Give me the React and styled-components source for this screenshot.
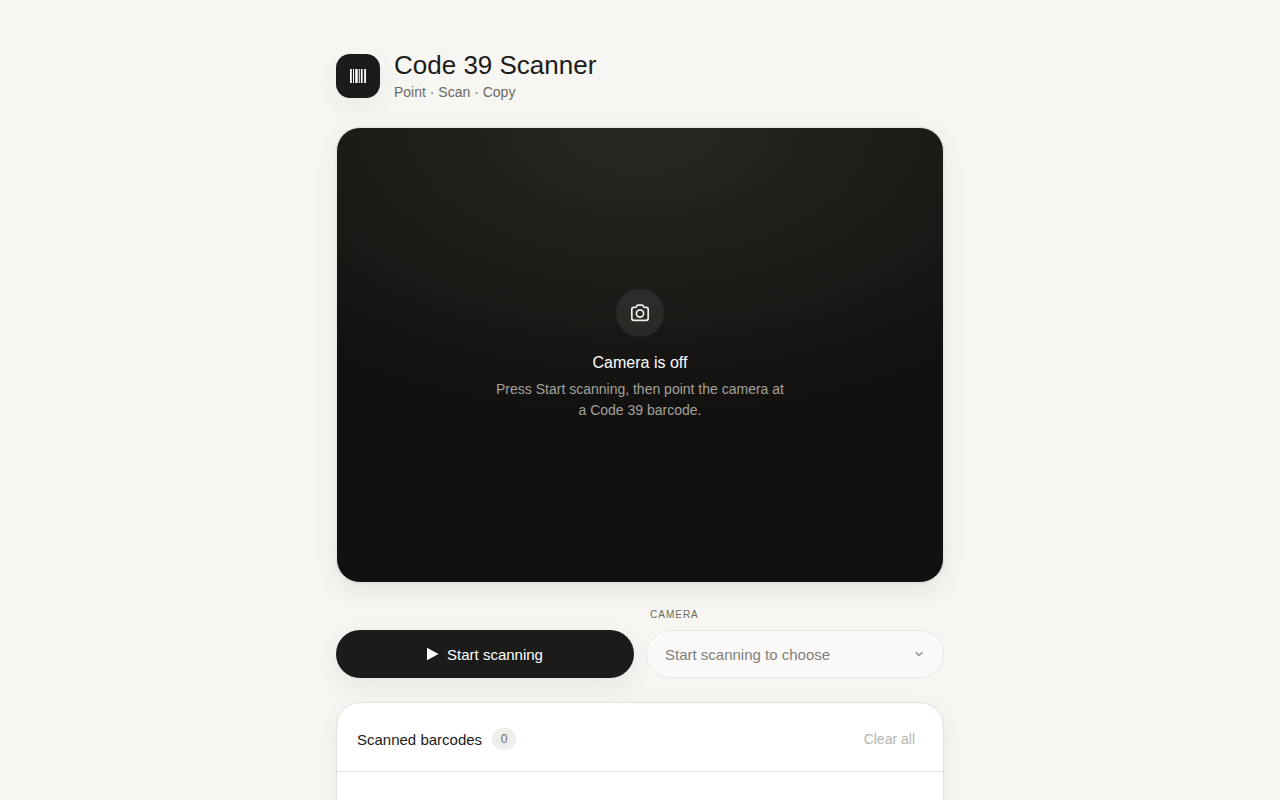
import React, { useState } from 'react';
import styled, { createGlobalStyle } from 'styled-components';

function App() {
  const [codes, setCodes] = useState([]);

  return (
    <>
      <GlobalStyle />
      <StPage>
        <StHeader>
          <StLogo>
            <svg width='16' height='14' viewBox='0 0 16 14' aria-hidden='true'>
              <path
                d='M0 0h1.800v14H0zM3 0h1v14H3zM5.200 0h2.500v14H5.200zM8.800 0h1v14h-1zM10.900 0h1.700v14h-1.700zM14.200 0H16v14h-1.800z'
                fill='#fff'
              />
            </svg>
          </StLogo>
          <div>
            <StTitle>Code 39 Scanner</StTitle>
            <StTagline>Point · Scan · Copy</StTagline>
          </div>
        </StHeader>

        <StViewer>
          <StCameraCircle>
            <svg
              width='20'
              height='20'
              viewBox='0 0 20 20'
              fill='none'
              stroke='currentColor'
              strokeWidth='1.7'
              strokeLinejoin='round'
              aria-hidden='true'
            >
              <path d='M3.800 4.400h1.300c.7 0 1-.3 1.400-.9l.3-.6c.3-.5.7-.8 1.300-.8h3.800c.6 0 1 .3 1.300.8l.3.6c.4.6.7.9 1.400.9h1.300c1.200 0 2 .8 2 2v8.900c0 1.200-.8 2-2 2H3.800c-1.200 0-2-.8-2-2V6.400c0-1.200.8-2 2-2z' />
              <circle cx='10' cy='10.500' r='3.600' />
            </svg>
          </StCameraCircle>
          <StViewerTitle>Camera is off</StViewerTitle>
          <StViewerText>
            Press Start scanning, then point the camera at a Code 39 barcode.
          </StViewerText>
        </StViewer>

        <StControls>
          <StStartButton type='button'>
            <svg width='12' height='14' viewBox='0 0 12 14' aria-hidden='true'>
              <path d='M0 .8 11.500 7 0 13.200z' fill='currentColor' />
            </svg>
            Start scanning
          </StStartButton>
          <StField>
            <StLabel htmlFor='camera'>Camera</StLabel>
            <StSelectWrap>
              <StSelect id='camera' disabled>
                <option>Start scanning to choose</option>
              </StSelect>
              <StChevron
                width='10'
                height='6'
                viewBox='0 0 10 6'
                aria-hidden='true'
              >
                <path
                  d='M2 1.500 5 4.500 8 1.500'
                  fill='none'
                  stroke='#96948f'
                  strokeWidth='1.500'
                  strokeLinecap='round'
                  strokeLinejoin='round'
                />
              </StChevron>
            </StSelectWrap>
          </StField>
        </StControls>

        <StCard>
          <StCardHeader>
            <StCardTitle>Scanned barcodes</StCardTitle>
            <StCount>{codes.length}</StCount>
            <StClear
              type='button'
              disabled={codes.length === 0}
              onClick={() => setCodes([])}
            >
              Clear all
            </StClear>
          </StCardHeader>
          <StList>
            {codes.map((code) => (
              <li key={code}>{code}</li>
            ))}
          </StList>
        </StCard>
      </StPage>
    </>
  );
}

export default App;

const GlobalStyle = createGlobalStyle`
  * {
    box-sizing: border-box;
  }
  html {
    scrollbar-width: none;
  }
  body {
    margin: 0;
    background-color: #f7f6f2;
    color: #1c1b19;
    font-family: 'Liberation Sans', Arial, sans-serif;
    font-size: 15px;
  }
  button,
  select {
    font-family: inherit;
  }
`;

const StPage = styled.main`
  display: flex;
  flex-direction: column;
  gap: 24px;
  max-width: 640px;
  margin: 0 auto;
  padding: 48px 16px;
`;

const StHeader = styled.header`
  display: flex;
  align-items: center;
  gap: 14px;
`;

const StLogo = styled.div`
  display: flex;
  align-items: center;
  justify-content: center;
  width: 44px;
  height: 44px;
  border-radius: 14px;
  background-color: #1c1b19;
  box-shadow: 0 8px 24px rgba(28, 27, 25, 0.06);
`;

const StTitle = styled.h1`
  margin: 0;
  font-size: 26px;
  font-weight: 400;
  line-height: 34px;
`;

const StTagline = styled.p`
  margin: 0;
  color: #6b6a66;
  font-size: 14px;
  line-height: 21px;
`;

const StViewer = styled.section`
  display: flex;
  flex-direction: column;
  align-items: center;
  justify-content: center;
  aspect-ratio: 4 / 3;
  border: 1px solid #e7e5df;
  border-radius: 24px;
  background: radial-gradient(120% 90% at 50% 0%, #2a2824 0%, #12110f 70%)
    #12110f;
  box-shadow: 0 1px 2px rgba(28, 27, 25, 0.04),
    0 8px 24px rgba(28, 27, 25, 0.08);
  text-align: center;
`;

const StCameraCircle = styled.div`
  display: flex;
  align-items: center;
  justify-content: center;
  width: 48px;
  height: 48px;
  margin-bottom: 14px;
  border-radius: 50%;
  background-color: rgba(255, 255, 255, 0.08);
  color: #f0efec;
`;

const StViewerTitle = styled.h2`
  margin: 0 0 4px;
  color: #fff;
  font-size: 16px;
  font-weight: 400;
  line-height: 24px;
`;

const StViewerText = styled.p`
  max-width: 296px;
  margin: 0;
  color: #a3a19c;
  font-size: 14px;
  line-height: 21px;
`;

const StControls = styled.div`
  display: grid;
  grid-template-columns: 1fr 1fr;
  align-items: end;
  gap: 12px;
`;

const StStartButton = styled.button`
  display: flex;
  align-items: center;
  justify-content: center;
  gap: 8px;
  height: 48px;
  border: none;
  border-radius: 24px;
  background-color: #1c1b19;
  box-shadow: 0 8px 24px rgba(28, 27, 25, 0.08);
  color: #fff;
  font-size: 15px;
  cursor: pointer;
`;

const StField = styled.div`
  display: flex;
  flex-direction: column;
  gap: 7px;
`;

const StLabel = styled.label`
  padding-left: 4px;
  color: #6b6a66;
  font-size: 10px;
  letter-spacing: 1px;
  line-height: 16px;
  text-transform: uppercase;
`;

const StSelectWrap = styled.div`
  position: relative;
`;

const StSelect = styled.select`
  display: block;
  width: 100%;
  height: 48px;
  padding: 0 44px 0 18px;
  border: 1px solid #ebe9e4;
  border-radius: 24px;
  appearance: none;
  background-color: #fbfaf8;
  color: #807f7b;
  font-size: 15px;
  opacity: 1;
`;

const StChevron = styled.svg`
  position: absolute;
  top: 21px;
  right: 20px;
  pointer-events: none;
`;

const StCard = styled.section`
  overflow: hidden;
  border: 1px solid #e2e1dc;
  border-radius: 24px;
  background-color: #fff;
  box-shadow: 0 1px 2px rgba(28, 27, 25, 0.04),
    0 8px 24px rgba(28, 27, 25, 0.06);
`;

const StCardHeader = styled.div`
  display: flex;
  align-items: center;
  gap: 10px;
  padding: 18px 16px 14px 20px;
  border-bottom: 1px solid #e2e1dc;
`;

const StCardTitle = styled.h2`
  margin: 0;
  font-size: 15px;
  font-weight: 400;
`;

const StCount = styled.span`
  min-width: 24px;
  padding: 0 8px;
  border-radius: 11px;
  background-color: #f0eeea;
  color: #6b6a66;
  font-size: 12px;
  line-height: 22px;
  text-align: center;
`;

const StClear = styled.button`
  height: 36px;
  margin-left: auto;
  padding: 0 12px;
  border: none;
  border-radius: 18px;
  background-color: transparent;
  color: #6b6a66;
  font-size: 14px;
  cursor: pointer;
  &:disabled {
    color: #b5b4b1;
    cursor: default;
  }
`;

const StList = styled.ul`
  min-height: 180px;
  margin: 0;
  padding: 20px;
  list-style: none;
`;
